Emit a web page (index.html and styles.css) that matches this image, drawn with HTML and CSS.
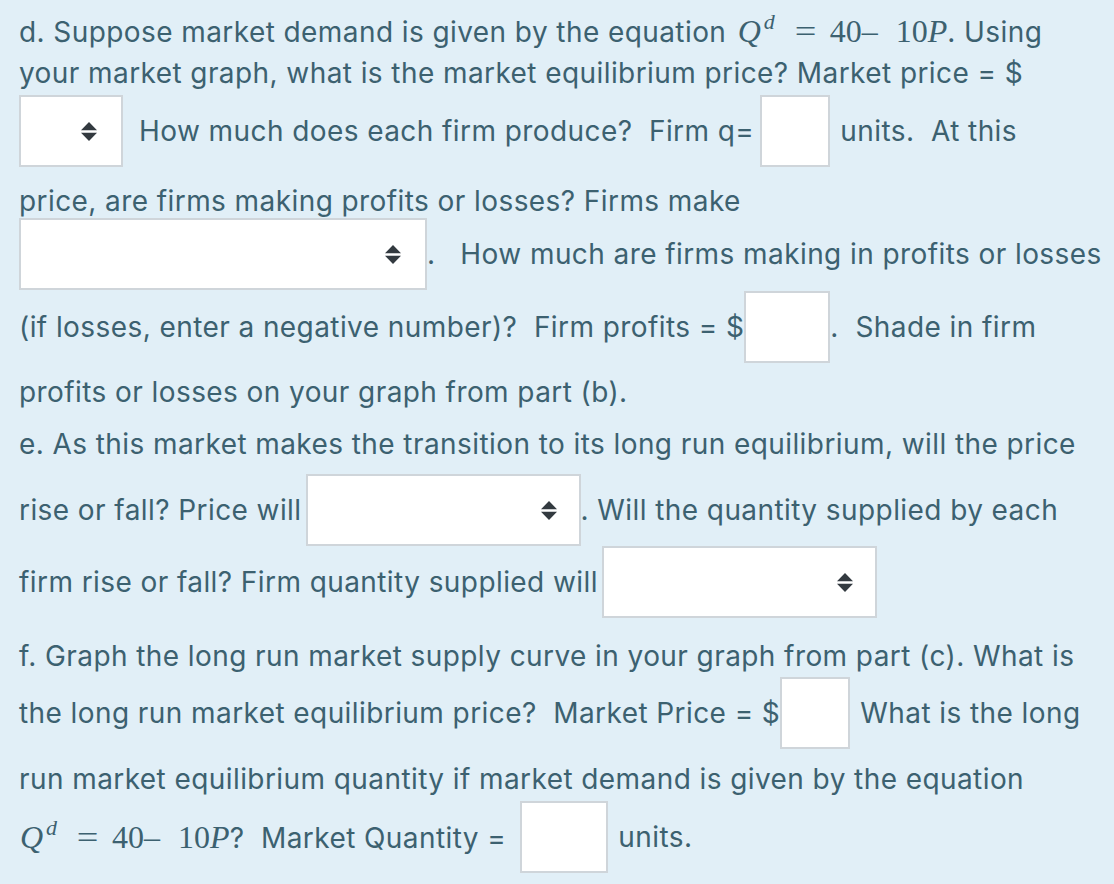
FILE: index.html
```html
<!DOCTYPE html>
<html>
<head>
<meta charset="utf-8">
<link rel="stylesheet" href="styles.css">
</head>
<body>
<div class="q">
  <div class="ln l1"><span class="t">d. Suppose market demand is given by the equation <span class="math"><i class="mq">Q</i><sup>d</sup><span class="eq">=</span>40–<span class="ms"></span>10<i>P</i></span>. Using</span></div>
  <div class="ln l2"><span class="t">your market graph, what is the market equilibrium price? Market price = $</span></div>
  <div class="ln bx l3">
    <span class="inp sel w104"><svg class="arr" width="16" height="19" viewBox="0 0 16 19"><path d="M8 0L16 8.3H0Z M0 10.7H16L8 19Z"/></svg></span>
    <span class="t m16">How much does each firm produce?  Firm q=</span>
    <span class="inp w70 m6"></span>
    <span class="t m10">units.  At this</span>
  </div>
  <div class="ln l4"><span class="t">price, are firms making profits or losses? Firms make</span></div>
  <div class="ln bx l5">
    <span class="inp sel w408"><svg class="arr" width="16" height="19" viewBox="0 0 16 19"><path d="M8 0L16 8.3H0Z M0 10.7H16L8 19Z"/></svg></span>
    <span class="t">.   How much are firms making in profits or losses</span>
  </div>
  <div class="ln bx l6">
    <span class="t">(if losses, enter a negative number)?  Firm profits = $</span>
    <span class="inp w86"></span>
    <span class="t">.  Shade in firm</span>
  </div>
  <div class="ln l7"><span class="t">profits or losses on your graph from part (b).</span></div>

  <div class="ln l8"><span class="t">e. As this market makes the transition to its long run equilibrium, will the price</span></div>
  <div class="ln bx l9">
    <span class="t">rise or fall? Price will</span>
    <span class="inp sel w275 pr24 m4"><svg class="arr" width="16" height="19" viewBox="0 0 16 19"><path d="M8 0L16 8.3H0Z M0 10.7H16L8 19Z"/></svg></span>
    <span class="t">. Will the quantity supplied by each</span>
  </div>
  <div class="ln bx l10">
    <span class="t">firm rise or fall? Firm quantity supplied will</span>
    <span class="inp sel w275 pr24 m4"><svg class="arr" width="16" height="19" viewBox="0 0 16 19"><path d="M8 0L16 8.3H0Z M0 10.7H16L8 19Z"/></svg></span>
  </div>

  <div class="ln l11"><span class="t">f. Graph the long run market supply curve in your graph from part (c). What is</span></div>
  <div class="ln bx l12">
    <span class="t">the long run market equilibrium price?  Market Price = $</span>
    <span class="inp w70"></span>
    <span class="t m10">What is the long</span>
  </div>
  <div class="ln l13"><span class="t">run market equilibrium quantity if market demand is given by the equation</span></div>
  <div class="ln bx l14">
    <span class="t"><span class="math"><i class="mq0">Q</i><sup>d</sup><span class="eq">=</span>40–<span class="ms"></span>10<i>P</i></span>?  Market Quantity =</span>
    <span class="inp w88 m14"></span>
    <span class="t m10">units.</span>
  </div>
</div>
</body>
</html>
```

FILE: styles.css
```css
html, body {
  margin: 0;
  padding: 0;
  background: #e1eff7;
}
body {
  width: 1114px;
  height: 884px;
  overflow: hidden;
  font-family: Inter, "Noto Sans", sans-serif;
  font-size: 28px;
  letter-spacing: 0.42px;
  color: #3c6170;
}
.q {
  padding: 9px 0 0 19px;
}
.ln {
  display: flex;
  align-items: center;
  white-space: pre;
  height: 44px;
  line-height: 44px;
}
.ln.bx {
  height: 72px;
}
.t {
  display: block;
}
.math {
  font-family: "Liberation Serif", "DejaVu Serif", serif;
  font-size: 32px;
  letter-spacing: 0;
  color: #3c6170;
}
.math i {
  font-style: italic;
}
.mq {
  margin-left: 3px;
}
.mq0 {
  margin-left: 1px;
}
.math sup {
  font-size: 22px;
  font-style: italic;
  line-height: 0;
  vertical-align: 13px;
  margin-left: 3px;
}
.eq {
  display: inline-block;
  width: 21px;
  text-align: center;
  margin: 0 14px 0 20px;
  transform: scaleX(1.2);
}
.ms {
  display: inline-block;
  width: 18px;
}
.inp {
  box-sizing: border-box;
  display: block;
  height: 72px;
  background: #fff;
  border: 2px solid #cfd5da;
}
.sel {
  display: flex;
  align-items: center;
  justify-content: flex-end;
  padding-right: 24px;
}
.pr24 { padding-right: 22px; }
.arr { fill: #333a40; display: block; }
.w70 { width: 70px; }
.w86 { width: 86px; }
.w88 { width: 88px; }
.w104 { width: 104px; }
.w275 { width: 275px; }
.w408 { width: 408px; }
.m16 { margin-left: 16px; }
.m14 { margin-left: 14px; }
.m10 { margin-left: 10px; }
.m6 { margin-left: 6px; }
.m4 { margin-left: 4px; }

.l1 { margin-top: 0; }
.l2 { margin-top: -2px; }
.l3 { margin-top: 0; }
.l4 { margin-top: 12px; }
.l5 { margin-top: -5px; }
.l6 { margin-top: 1px; }
.l7 { margin-top: 7px; }
.l8 { margin-top: 8px; }
.l9 { margin-top: 8px; }
.l10 { margin-top: 0; }
.l11 { margin-top: 16px; }
.l12 { margin-top: -1px; }
.l13 { margin-top: 8px; }
.l14 { margin-top: 0; }
```
